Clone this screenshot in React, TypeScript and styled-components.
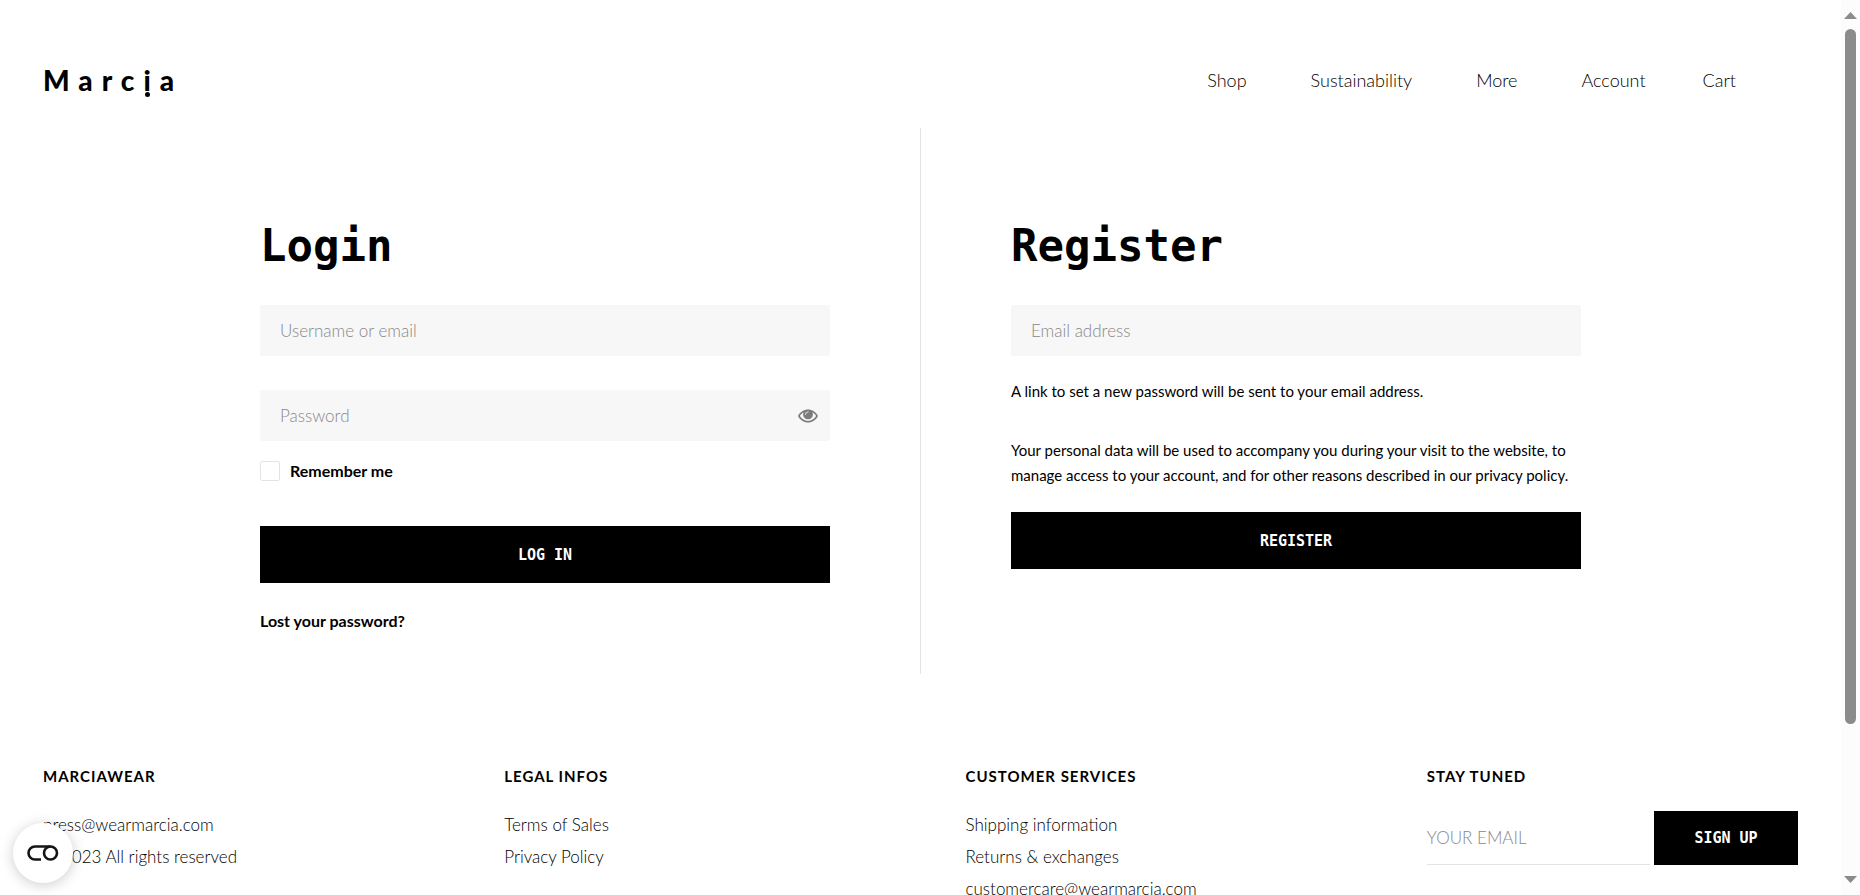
import React from "react";
import styled, { createGlobalStyle } from "styled-components";

const sans = `Lato, "Liberation Sans", sans-serif`;
const mono = `"DejaVu Sans Mono", "Liberation Mono", monospace`;

const GlobalStyle = createGlobalStyle`
  *, *::before, *::after { box-sizing: border-box; }
  body { margin: 0; background: #fff; color: #000; font-family: ${sans}; font-size: 16px; }
  a { color: inherit; text-decoration: none; }
  h2, h3, p, ul { margin: 0; padding: 0; }
  ul { list-style: none; }
`;

const Window = styled.div`
  display: flex;
  height: 100vh;
  overflow: hidden;
`;

const Page = styled.div`
  flex: 1;
  min-width: 0;
  overflow: hidden;
`;

const Header = styled.header`
  display: flex;
  justify-content: space-between;
  align-items: flex-start;
  padding: 58px 105px 26px 43px;
`;

const Logo = styled.a`
  font-size: 28px;
  line-height: 44px;
  font-weight: 900;
  letter-spacing: 9px;
`;

const DottedI = styled.span`
  position: relative;
  &::after {
    content: "";
    position: absolute;
    left: 2px;
    bottom: 0;
    width: 5px;
    height: 5px;
    border-radius: 50%;
    background: #000;
  }
`;

const Nav = styled.nav`
  display: flex;
  gap: 57px;
  padding-top: 1px;
  font-size: 18px;
  line-height: 43px;
  font-weight: 300;
`;

const Menu = styled.div`
  display: flex;
  gap: 64px;
`;

const Account = styled.main`
  display: flex;
  height: 546px;
`;

const Half = styled.section<{ $side: "left" | "right" }>`
  flex: 1;
  display: flex;
  justify-content: ${(p) => (p.$side === "left" ? "flex-end" : "flex-start")};
  padding: 90px 90px 0;
  ${(p) => p.$side === "left" && "border-right: 1px solid #e4e4e4;"}
`;

const Form = styled.form`
  display: flex;
  flex-direction: column;
  width: 100%;
  max-width: 570px;
`;

const Title = styled.h2`
  margin-bottom: 31px;
  font: bold 44px/56px ${mono};
`;

const Field = styled.div`
  position: relative;
  display: flex;
`;

const Input = styled.input`
  flex: 1;
  min-width: 0;
  height: 51px;
  padding: 0 20px;
  border: 0;
  border-radius: 2px;
  background: #f7f7f7;
  font: 300 17px/26px ${sans};
  &::placeholder { color: #888; opacity: 1; }
`;

const Reveal = styled.button`
  position: absolute;
  top: 0;
  right: 12px;
  height: 100%;
  display: flex;
  align-items: center;
  padding: 0;
  border: 0;
  background: none;
`;

const Remember = styled.label`
  display: flex;
  align-items: center;
  gap: 10px;
  font-size: 16px;
  line-height: 20px;
  font-weight: 700;
`;

const Check = styled.input`
  appearance: none;
  width: 20px;
  height: 20px;
  margin: 0;
  border: 1px solid #e3e3e3;
  border-radius: 2px;
  background: #fff;
`;

const Button = styled.button`
  height: 57px;
  border: 0;
  background: #000;
  color: #fff;
  font: bold 15px/20px ${mono};
`;

const Gap = styled.div<{ $size: number }>`
  flex: none;
  height: ${(p) => p.$size}px;
`;

const Lost = styled.a`
  align-self: flex-start;
  font-size: 16px;
  line-height: 24px;
  font-weight: 700;
`;

const Note = styled.p`
  font-size: 15px;
  line-height: 25px;
`;

const Footer = styled.footer`
  display: grid;
  grid-template-columns: repeat(4, minmax(0, 1fr));
  gap: 90px;
  padding: 90px 43px;
`;

const FootTitle = styled.h3`
  margin-bottom: 21px;
  font-size: 15px;
  line-height: 24px;
  font-weight: 700;
  letter-spacing: 1px;
`;

const Links = styled.ul`
  font-size: 17px;
  line-height: 32px;
  font-weight: 300;
`;

const SignUp = styled.form`
  display: flex;
  gap: 4px;
  height: 54px;
  margin-top: 23px;
`;

const MailInput = styled.input`
  flex: 1;
  min-width: 0;
  padding: 0;
  border: 0;
  border-bottom: 1px solid #e3e3e3;
  background: none;
  font: 300 17px/26px ${sans};
  &::placeholder { color: #888; opacity: 1; }
`;

const SignButton = styled(Button)`
  width: 144px;
  height: 54px;
`;

const Consent = styled.button`
  position: fixed;
  left: 13px;
  bottom: 12px;
  width: 60px;
  height: 60px;
  display: flex;
  align-items: center;
  justify-content: center;
  padding: 0;
  border: 0;
  border-radius: 50%;
  background: #fff;
  box-shadow: 0 2px 14px rgba(0, 0, 0, 0.2);
`;

const Scroll = styled.div`
  width: 19px;
  display: flex;
  flex-direction: column;
  align-items: center;
  padding: 12px 0;
  background: #fcfcfc;
`;

const Track = styled.div`
  flex: 1;
  padding: 10px 0 0;
`;

const Thumb = styled.div`
  width: 11px;
  height: 82%;
  border-radius: 6px;
  background: #8b8b8b;
`;

const Arrow = ({ d }: { d: string }) => (
  <svg width="13" height="7" viewBox="0 0 13 7" aria-hidden="true"><path d={d} fill="#8b8b8b" /></svg>
);

const menu = ["Shop", "Sustainability", "More", "Account"];

const columns = [
  { title: "MARCIAWEAR", items: ["press@wearmarcia.com", "© 2023 All rights reserved"] },
  { title: "LEGAL INFOS", items: ["Terms of Sales", "Privacy Policy"] },
  { title: "CUSTOMER SERVICES", items: ["Shipping information", "Returns & exchanges", "customercare@wearmarcia.com"] },
];

export default function App() {
  return (
    <>
      <GlobalStyle />
      <Window>
        <Page>
          <Header>
            <Logo href="#">Marc<DottedI>i</DottedI>a</Logo>
            <Nav>
              <Menu>{menu.map((m) => <a key={m} href="#">{m}</a>)}</Menu>
              <a href="#">Cart</a>
            </Nav>
          </Header>
          <Account>
            <Half $side="left">
              <Form>
                <Title>Login</Title>
                <Field><Input aria-label="Username or email" placeholder="Username or email" /></Field>
                <Gap $size={34} />
                <Field>
                  <Input type="password" aria-label="Password" placeholder="Password" />
                  <Reveal type="button" aria-label="Show password">
                    <svg width="20" height="14" viewBox="0 0 20 14">
                      <path fillRule="evenodd" fill="#7b7b7b" d="M0 7C2 3 5.800 .5 10 .5S18 3 20 7C18 11 14.200 13.500 10 13.500S2 11 0 7ZM1.900 7C3.700 10 6.600 11.900 10 11.900S16.300 10 18.100 7C17.200 5.500 16 4.200 14.400 3.300A4.900 4.900 0 1 1 5.600 3.300C4 4.200 2.800 5.500 1.900 7Z" />
                      <path d="M7.300 5.600A2.900 2.900 0 0 1 10.200 2.800" fill="none" stroke="#e8e8e8" strokeWidth=".9" strokeLinecap="round" />
                    </svg>
                  </Reveal>
                </Field>
                <Gap $size={20} />
                <Remember><Check type="checkbox" />Remember me</Remember>
                <Gap $size={45} />
                <Button type="button">LOG IN</Button>
                <Gap $size={26} />
                <Lost href="#">Lost your password?</Lost>
              </Form>
            </Half>
            <Half $side="right">
              <Form>
                <Title>Register</Title>
                <Field><Input type="email" aria-label="Email address" placeholder="Email address" /></Field>
                <Gap $size={23} />
                <Note>A link to set a new password will be sent to your email address.</Note>
                <Gap $size={34} />
                <Note>Your personal data will be used to accompany you during your visit to the website, to manage access to your account, and for other reasons described in our privacy policy.</Note>
                <Gap $size={24} />
                <Button type="button">REGISTER</Button>
              </Form>
            </Half>
          </Account>
          <Footer>
            {columns.map((c) => (
              <div key={c.title}>
                <FootTitle>{c.title}</FootTitle>
                <Links>{c.items.map((i) => <li key={i}><a href="#">{i}</a></li>)}</Links>
              </div>
            ))}
            <div>
              <FootTitle>STAY TUNED</FootTitle>
              <SignUp>
                <MailInput type="email" aria-label="Your email" placeholder="YOUR EMAIL" />
                <SignButton type="button">SIGN UP</SignButton>
              </SignUp>
            </div>
          </Footer>
        </Page>
        <Scroll aria-hidden="true">
          <Arrow d="M6.500 0 13 7H0Z" />
          <Track><Thumb /></Track>
          <Arrow d="M0 0H13L6.500 7Z" />
        </Scroll>
      </Window>
      <Consent type="button" aria-label="Cookie settings">
        <svg width="32" height="18" viewBox="0 0 32 18" fill="none" stroke="#141414" strokeWidth="2.600">
          <path d="M14 15.500H8A6.500 6.500 0 0 1 8 2.500H23.500" />
          <circle cx="23.500" cy="9" r="6.500" />
        </svg>
      </Consent>
    </>
  );
}
